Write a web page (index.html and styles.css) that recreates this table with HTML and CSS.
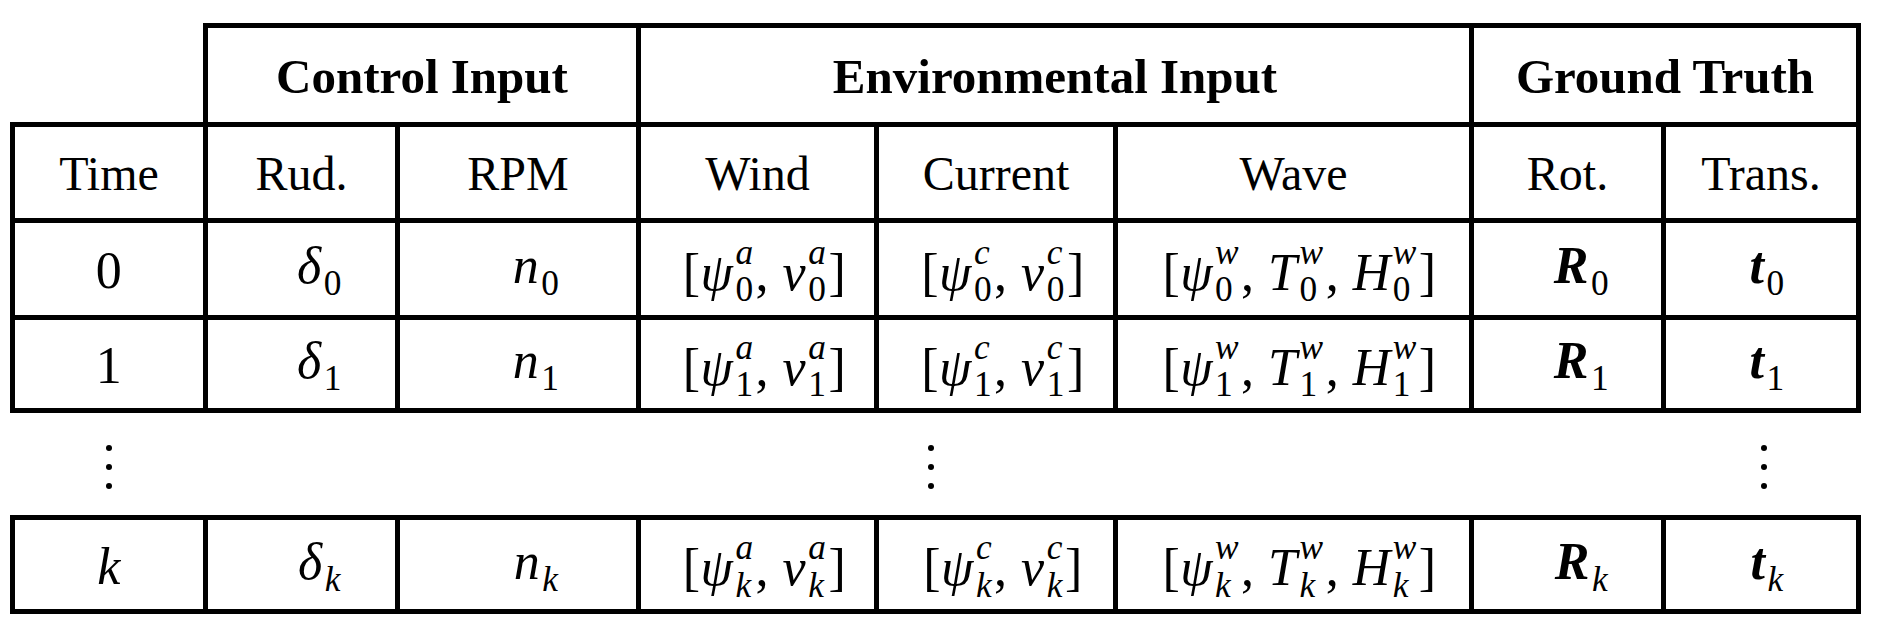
FILE: index.html
```html
<!DOCTYPE html>
<html>
<head>
<meta charset="utf-8">
<title>Dataset structure</title>
<link rel="stylesheet" href="styles.css">
</head>
<body>
<div class="tbl">
  <div class="c blank"></div>
  <div class="c top grp span2">Control Input</div>
  <div class="c top grp span3">Environmental Input</div>
  <div class="c top grp span2">Ground Truth</div>

  <div class="c first hd">Time</div>
  <div class="c hd">Rud.</div>
  <div class="c hd">RPM</div>
  <div class="c hd">Wind</div>
  <div class="c hd">Current</div>
  <div class="c hd">Wave</div>
  <div class="c hd">Rot.</div>
  <div class="c hd">Trans.</div>

  <div class="c first m"><span class="eq">0</span></div>
  <div class="c m sh"><span class="eq"><i>δ</i><span class="sb">0</span></span></div>
  <div class="c m sh"><span class="eq"><i>n</i><span class="sb">0</span></span></div>
  <div class="c m ws"><span class="eq">[<i>ψ</i><span class="ss"><i>a</i><span>0</span></span>, <i>v</i><span class="ss"><i>a</i><span>0</span></span>]</span></div>
  <div class="c m ws"><span class="eq">[<i>ψ</i><span class="ss"><i>c</i><span>0</span></span>, <i>v</i><span class="ss"><i>c</i><span>0</span></span>]</span></div>
  <div class="c m wv"><span class="eq">[<i>ψ</i><span class="ss"><i>w</i><span>0</span></span>, <i>T</i><span class="ss"><i>w</i><span>0</span></span>, <i>H</i><span class="ss"><i>w</i><span>0</span></span>]</span></div>
  <div class="c m shr"><span class="eq"><b><i>R</i></b><span class="sb">0</span></span></div>
  <div class="c m sht"><span class="eq"><b><i>t</i></b><span class="sb">0</span></span></div>

  <div class="c first m"><span class="eq">1</span></div>
  <div class="c m sh"><span class="eq"><i>δ</i><span class="sb">1</span></span></div>
  <div class="c m sh"><span class="eq"><i>n</i><span class="sb">1</span></span></div>
  <div class="c m ws"><span class="eq">[<i>ψ</i><span class="ss"><i>a</i><span>1</span></span>, <i>v</i><span class="ss"><i>a</i><span>1</span></span>]</span></div>
  <div class="c m ws"><span class="eq">[<i>ψ</i><span class="ss"><i>c</i><span>1</span></span>, <i>v</i><span class="ss"><i>c</i><span>1</span></span>]</span></div>
  <div class="c m wv"><span class="eq">[<i>ψ</i><span class="ss"><i>w</i><span>1</span></span>, <i>T</i><span class="ss"><i>w</i><span>1</span></span>, <i>H</i><span class="ss"><i>w</i><span>1</span></span>]</span></div>
  <div class="c m shr"><span class="eq"><b><i>R</i></b><span class="sb">1</span></span></div>
  <div class="c m sht"><span class="eq"><b><i>t</i></b><span class="sb">1</span></span></div>

  <div class="gap g1"><span class="dots"><span></span><span></span><span></span></span></div>
  <div class="gap gmid"><span class="dots"><span></span><span></span><span></span></span></div>
  <div class="gap g8"><span class="dots"><span></span><span></span><span></span></span></div>

  <div class="c first top m"><span class="eq"><i>k</i></span></div>
  <div class="c top m sh"><span class="eq"><i>δ</i><span class="sb"><i>k</i></span></span></div>
  <div class="c top m sh"><span class="eq"><i>n</i><span class="sb"><i>k</i></span></span></div>
  <div class="c top m ws"><span class="eq">[<i>ψ</i><span class="ss"><i>a</i><i>k</i></span>, <i>v</i><span class="ss"><i>a</i><i>k</i></span>]</span></div>
  <div class="c top m ws"><span class="eq">[<i>ψ</i><span class="ss"><i>c</i><i>k</i></span>, <i>v</i><span class="ss"><i>c</i><i>k</i></span>]</span></div>
  <div class="c top m wv"><span class="eq">[<i>ψ</i><span class="ss"><i>w</i><i>k</i></span>, <i>T</i><span class="ss"><i>w</i><i>k</i></span>, <i>H</i><span class="ss"><i>w</i><i>k</i></span>]</span></div>
  <div class="c top m shr"><span class="eq"><b><i>R</i></b><span class="sb"><i>k</i></span></span></div>
  <div class="c top m sht"><span class="eq"><b><i>t</i></b><span class="sb"><i>k</i></span></span></div>
</div>
</body>
</html>
```

FILE: styles.css
```css
html, body {
  margin: 0;
  padding: 0;
  background: #ffffff;
}

body {
  font-family: "Liberation Serif", "Times New Roman", serif;
  color: #000;
}

.tbl {
  display: grid;
  grid-template-columns: 198px 192px 241px 238px 239px 356px 192px 195px;
  grid-template-rows: 104px 96px 97px 93px 102px 99px;
  margin: 23px 0 0 10px;
  width: 1851px;
}

.c {
  box-sizing: border-box;
  border-right: 5px solid #000;
  border-bottom: 5px solid #000;
  display: flex;
  align-items: center;
  justify-content: center;
  line-height: 1;
  white-space: nowrap;
}

.top { border-top: 5px solid #000; }
.first { border-left: 5px solid #000; }

.span2 { grid-column: span 2; }
.span3 { grid-column: span 3; }

.grp {
  font-size: 49px;
  font-weight: bold;
  padding-top: 2px;
}

.hd {
  font-size: 48px;
  padding-top: 2px;
}

.m {
  font-size: 52px;
  padding-top: 4px;
}

.eq {
  display: inline-block;
  line-height: 1;
  letter-spacing: 0.5px;
}

.eq i { font-style: italic; }
.eq b { font-weight: bold; }

.sh { padding-left: 36px; }
.shr { padding-left: 28px; }
.sht { padding-left: 12px; }
.ws { padding-left: 14px; }
.wv { padding-left: 12px; }

.sb {
  font-size: 0.68em;
  vertical-align: -0.34em;
  margin-left: 2px;
}

.ss {
  display: inline-flex;
  flex-direction: column;
  font-size: 0.68em;
  line-height: 1.06;
  vertical-align: 0.74em;
  margin-left: 2px;
  margin-right: 2px;
}

.ss > * { display: block; font-style: normal; }
.ss > i { font-style: italic; }

.gap {
  display: flex;
  align-items: center;
  justify-content: center;
}

.g1 { grid-column: 1; }
.gmid { grid-column: 2 / span 6; padding-right: 12px; }
.g8 { grid-column: 8; }

.dots {
  display: flex;
  flex-direction: column;
  gap: 13px;
  margin-top: 6px;
}

.dots span {
  display: block;
  width: 6px;
  height: 6px;
  border-radius: 50%;
  background: #000;
}
```
